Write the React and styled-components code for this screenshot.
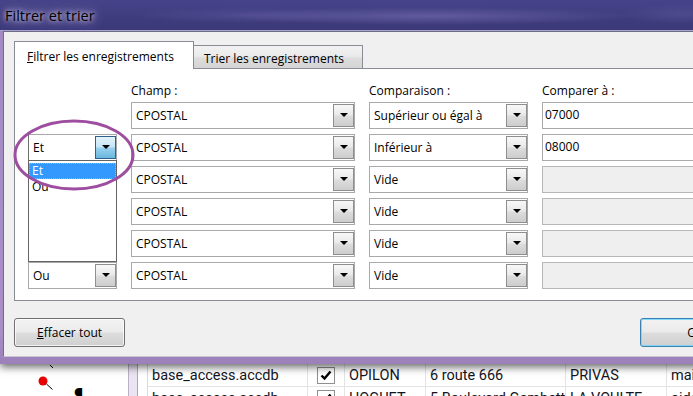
import React from "react";
import styled, { createGlobalStyle } from "styled-components";

const GlobalStyle = createGlobalStyle`
  html, body {
    margin: 0;
    padding: 0;
    background: #fff;
  }
  body {
    width: 693px;
    height: 396px;
    overflow: hidden;
  }
  * {
    box-sizing: border-box;
  }
`;

const Screen = styled.div`
  width: 693px;
  height: 396px;
  overflow: hidden;
  display: flex;
  flex-direction: column;
  background: #fff;
  font-family: "Open Sans", "Noto Sans", sans-serif;
  color: #000;
`;

// Dialog window
const Window = styled.div`
  position: relative;
  z-index: 1;
  flex: none;
  width: 884px;
  display: flex;
  flex-direction: column;
  box-shadow: 0 3px 8px rgba(0, 0, 0, 0.6);
`;

const TitleBar = styled.div`
  height: 31px;
  padding-left: 5px;
  display: flex;
  align-items: center;
  border-bottom: 1px solid #a7a1d4;
  font-size: 14.5px;
  background:
    radial-gradient(210px 9px at 430px 16px, rgba(125, 115, 185, 0.55), transparent),
    radial-gradient(120px 8px at 250px 15px, rgba(110, 100, 175, 0.35), transparent),
    radial-gradient(60px 10px at 680px 14px, rgba(95, 90, 160, 0.45), transparent),
    linear-gradient(180deg, #46438a 0%, #3f3c7e 55%, #3c3979 100%);
`;

const TitleText = styled.span`
  text-shadow: 0 0 5px rgba(235, 230, 255, 0.95), 0 0 10px rgba(215, 205, 250, 0.85),
    0 0 18px rgba(200, 190, 240, 0.75);
`;

const Frame = styled.div`
  padding: 0 3px 7px 3px;
  background: linear-gradient(180deg, #a48ac3 0%, #a98fc6 90%, #9c80ba 100%);
`;

const Body = styled.div`
  background: #f0f0f0;
  border: 1px solid #6e6e82;
  border-bottom-color: #c9c6d2;
  padding: 9px 10px 9px 10px;
`;

// Tabs
const TabStrip = styled.div`
  position: relative;
  z-index: 1;
  height: 28px;
  margin-bottom: -1px;
  display: flex;
  align-items: flex-end;
`;

const Tab = styled.div`
  height: ${(p) => (p.$active ? "28px" : "24px")};
  width: ${(p) => (p.$active ? "180px" : "169px")};
  padding: ${(p) => (p.$active ? "7px 0 0 12px" : "5px 0 0 10px")};
  border: 1px solid #898c95;
  border-bottom: ${(p) => (p.$active ? "none" : "1px solid #898c95")};
  border-left: ${(p) => (p.$active ? "1px solid #898c95" : "none")};
  background: ${(p) =>
    p.$active ? "#fff" : "linear-gradient(180deg, #f2f2f2 0%, #ebebeb 45%, #dddddd 55%, #d4d4d4 100%)"};
  font-size: 12px;
  line-height: 16px;
  white-space: nowrap;
`;

const Key = styled.span`
  text-decoration: underline;
`;

const Panel = styled.div`
  position: relative;
  height: 233px;
  background: #fff;
  border: 1px solid #898c95;
  padding: 12px 0 0 13px;
`;

const FilterGrid = styled.div`
  display: grid;
  grid-template-columns: 89px 224px 159px 160px;
  grid-template-rows: 16px repeat(6, 27px);
  column-gap: 14px;
  row-gap: 5px;
`;

const ColLabel = styled.div`
  padding-top: 2px;
  font-size: 12px;
  line-height: 16px;
`;

const Combo = styled.div`
  position: relative;
  display: flex;
  height: 27px;
  background: #fff;
  border: 1px solid #a9a9a9;
  border-left-color: ${(p) => (p.$dark ? "#6f6f6f" : "#a9a9a9")};
`;

const ComboValue = styled.span`
  flex: 1;
  min-width: 0;
  padding-left: 4px;
  font-size: 12px;
  line-height: 26px;
  white-space: nowrap;
  overflow: hidden;
`;

const DropButton = styled.span`
  flex: none;
  width: 21px;
  margin: 1px 0;
  display: flex;
  align-items: center;
  justify-content: center;
  padding-bottom: 2px;
  border: 1px solid ${(p) => (p.$pressed ? "#2c628b" : "#8e8e8e")};
  background: ${(p) =>
    p.$pressed
      ? "linear-gradient(180deg, #e5f4fc 0%, #c4e5f6 48%, #98d1ef 52%, #6cb6de 100%)"
      : "linear-gradient(180deg, #f8f8f8 0%, #e9e9e9 48%, #dcdcdc 52%, #cdcdcd 100%)"};

  &::after {
    content: "";
    border-left: 4px solid transparent;
    border-right: 4px solid transparent;
    border-top: 4px solid #000;
  }
`;

const DropList = styled.div`
  position: absolute;
  z-index: 5;
  top: 100%;
  left: -1px;
  right: -1px;
  height: 102px;
  background: #fff;
  border: 1px solid #646464;
  padding-top: 2px;
`;

const ListItem = styled.div`
  height: 16px;
  padding-left: 3px;
  font-size: 12px;
  line-height: 16px;
  color: ${(p) => (p.$selected ? "#fff" : "#000")};
  background: ${(p) => (p.$selected ? "#3399ff" : "transparent")};
  outline: ${(p) => (p.$selected ? "1px dotted #f4a536" : "none")};
  outline-offset: -1px;
`;

const ValueBox = styled.div`
  height: 27px;
  padding: 3px 0 0 2px;
  border: 1px solid ${(p) => (p.$disabled ? "#b7b7b7" : "#a9a9a9")};
  background: ${(p) => (p.$disabled ? "#efefef" : "#fff")};
  font-size: 12px;
  line-height: 18px;
`;

const Annotation = styled.svg`
  position: absolute;
  z-index: 6;
  left: -5px;
  top: 45px;
  overflow: visible;
  pointer-events: none;
`;

// Bottom buttons
const ButtonRow = styled.div`
  margin-top: 17px;
  display: flex;
  align-items: center;
`;

const RightButtons = styled.div`
  margin-left: auto;
  display: flex;
  gap: 8px;
`;

const PushButton = styled.button`
  width: 111px;
  height: 29px;
  padding: 0;
  border-radius: 3px;
  border: 1px solid ${(p) => (p.$default ? "#3c7fb1" : "#707070")};
  background: linear-gradient(180deg, #f2f2f2 0%, #ebebeb 48%, #dddddd 52%, #cfcfcf 100%);
  box-shadow: inset 0 0 0 1px ${(p) => (p.$default ? "rgba(120, 215, 250, 0.9)" : "rgba(255, 255, 255, 0.75)")};
  font-family: "Open Sans", "Noto Sans", sans-serif;
  font-size: 12px;
  color: #000;
`;

// Access window behind the dialog
const Backdrop = styled.div`
  flex: 1;
  min-height: 0;
  display: flex;
  background: #fff;
`;

const DesignPane = styled.svg`
  flex: none;
  display: block;
`;

const Splitter = styled.div`
  flex: none;
  width: 20px;
  background: linear-gradient(
    90deg,
    #b9b2c6 0 1px,
    #ebe5f3 1px 9px,
    #a9a9b6 9px 10px,
    #fff 10px 19px,
    #d9d9d9 19px 20px
  );
`;

const Sheet = styled.div`
  flex: 1;
  display: flex;
  flex-direction: column;
`;

const SheetRow = styled.div`
  flex: none;
  display: grid;
  grid-template-columns: 160px 37px 81px 140px 101px 200px;
  height: 23px;
  border-bottom: 1px solid #e4e4e4;
`;

const Cell = styled.div`
  padding-left: ${(p) => (p.$center ? "0" : "4px")};
  display: flex;
  align-items: center;
  justify-content: ${(p) => (p.$center ? "center" : "flex-start")};
  border-right: 1px solid #e4e4e4;
  font-family: Roboto, "Noto Sans", sans-serif;
  font-size: 14.5px;
  color: #14141e;
  white-space: nowrap;
  overflow: hidden;
`;

const CheckBox = styled.span`
  width: 18px;
  height: 17px;
  border: 1px solid #8f8f8f;
  background: #fff;
  display: flex;
  align-items: center;
  justify-content: center;
`;

const rows = [
  { op: null, field: "CPOSTAL", cmp: "Supérieur ou égal à", value: "07000" },
  { op: "Et", open: true, field: "CPOSTAL", cmp: "Inférieur à", value: "08000" },
  { op: "Et", field: "CPOSTAL", cmp: "Vide", value: null },
  { op: "Et", field: "CPOSTAL", cmp: "Vide", value: null },
  { op: "Et", field: "CPOSTAL", cmp: "Vide", value: null },
  { op: "Ou", field: "CPOSTAL", cmp: "Vide", value: null },
];

const records = [
  ["base_access.accdb", "OPILON", "6 route 666", "PRIVAS", "mairie"],
  ["base_access.accdb", "HOGUET", "5 Boulevard Gambetta", "LA VOULTE", "aide"],
];

function ComboBox({ value, pressed, children }) {
  return (
    <Combo $dark={pressed}>
      <ComboValue>{value}</ComboValue>
      <DropButton $pressed={pressed} />
      {children}
    </Combo>
  );
}

function Check() {
  return (
    <CheckBox>
      <svg width="12" height="11" viewBox="0 0 12 11">
        <path d="M1.5 5.5 L4.5 8.5 L10.5 1.5" fill="none" stroke="#000" strokeWidth="2.4" />
      </svg>
    </CheckBox>
  );
}

export default function App() {
  return (
    <Screen>
      <GlobalStyle />
      <Window>
        <TitleBar>
          <TitleText>Filtrer et trier</TitleText>
        </TitleBar>
        <Frame>
          <Body>
            <TabStrip>
              <Tab $active>
                <Key>F</Key>iltrer les enregistrements
              </Tab>
              <Tab>
                Trier les enre<Key>g</Key>istrements
              </Tab>
            </TabStrip>
            <Panel>
              <FilterGrid>
                <div />
                <ColLabel>Champ :</ColLabel>
                <ColLabel>Comparaison :</ColLabel>
                <ColLabel>Comparer à :</ColLabel>
                {rows.map((row, i) => (
                  <React.Fragment key={i}>
                    {row.op ? (
                      <ComboBox value={row.op} pressed={row.open}>
                        {row.open && (
                          <DropList>
                            <ListItem $selected>Et</ListItem>
                            <ListItem>Ou</ListItem>
                          </DropList>
                        )}
                      </ComboBox>
                    ) : (
                      <div />
                    )}
                    <ComboBox value={row.field} />
                    <ComboBox value={row.cmp} />
                    <ValueBox $disabled={!row.value}>{row.value}</ValueBox>
                  </React.Fragment>
                ))}
              </FilterGrid>
              <Annotation width="130" height="82" viewBox="0 0 130 82">
                <ellipse cx="64" cy="41" rx="59" ry="34" fill="none" stroke="#9d4ea0" strokeWidth="3" />
              </Annotation>
            </Panel>
            <ButtonRow>
              <PushButton>
                <Key>E</Key>ffacer tout
              </PushButton>
              <RightButtons>
                <PushButton $default>OK</PushButton>
                <PushButton>Annuler</PushButton>
              </RightButtons>
            </ButtonRow>
          </Body>
        </Frame>
      </Window>
      <Backdrop>
        <DesignPane width="128" height="32" viewBox="0 0 128 32">
          <line x1="50" y1="1" x2="53" y2="4" stroke="#000" strokeWidth="1" />
          <circle cx="43" cy="17" r="4.5" fill="#e80000" />
          <line x1="46.5" y1="20" x2="52.5" y2="25.5" stroke="#000" strokeWidth="1" />
          <text x="74" y="37" fontSize="19" fontWeight="bold" fontFamily="Roboto, sans-serif">
            ¶
          </text>
        </DesignPane>
        <Splitter />
        <Sheet>
          {records.map((r, i) => (
            <SheetRow key={i}>
              <Cell>{r[0]}</Cell>
              <Cell $center>
                <Check />
              </Cell>
              <Cell>{r[1]}</Cell>
              <Cell>{r[2]}</Cell>
              <Cell>{r[3]}</Cell>
              <Cell>{r[4]}</Cell>
            </SheetRow>
          ))}
        </Sheet>
      </Backdrop>
    </Screen>
  );
}
